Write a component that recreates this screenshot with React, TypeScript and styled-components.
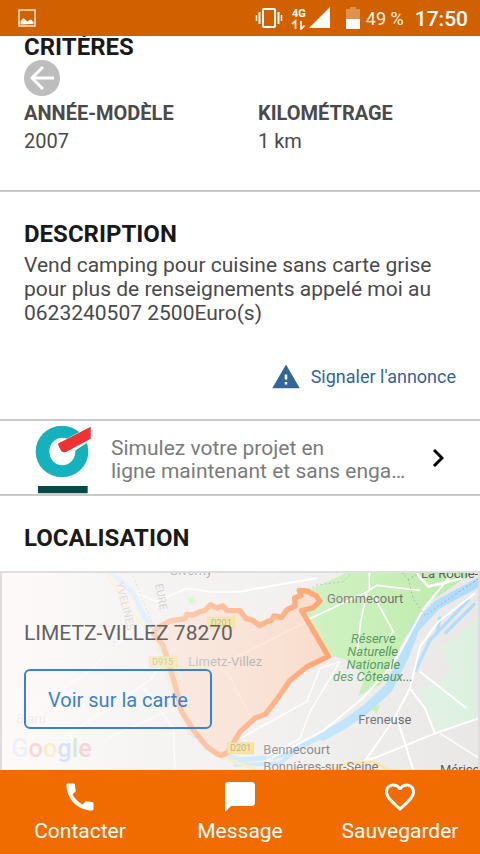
import React from "react";
import styled, { createGlobalStyle } from "styled-components";
import { MdCall, MdChatBubble, MdFavoriteBorder, MdWarning } from "react-icons/md";

const GlobalStyle = createGlobalStyle`
  *, *::before, *::after { box-sizing: border-box; }
  body {
    margin: 0;
    background: #fff;
    color: #4a4a4a;
    font-family: Roboto, "Liberation Sans", sans-serif;
    font-size: 20px;
    line-height: 24px;
  }
  h1, h2, p, dl, dt, dd { margin: 0; }
  button { font: inherit; cursor: pointer; }
  svg { display: block; flex: none; }
`;

const Screen = styled.div`
  display: flex;
  flex-direction: column;
  min-height: 100vh;
`;

const StatusBar = styled.header`
  position: sticky;
  top: 0;
  z-index: 2;
  display: flex;
  align-items: center;
  justify-content: space-between;
  height: 36px;
  padding: 0 12px 0 18px;
  background: #d16000;
  color: #fff;
`;

const StatusGroup = styled.div`
  display: flex;
  align-items: center;
`;

const Network = styled.div`
  margin: 0 15px 0 8px;
`;

const Battery = styled.span`
  margin: 0 11px 0 6px;
  padding-top: 2px;
  font-size: 18px;
  color: #fff3e8;
`;

const Clock = styled.time`
  padding-top: 2px;
  font-size: 21px;
  font-weight: 500;
`;

const Main = styled.main`
  flex: 1;
  display: flex;
  flex-direction: column;
`;

const Section = styled.section<{ $pad: string; $line?: boolean }>`
  padding: ${(p) => p.$pad};
  border-bottom: ${(p) => (p.$line ? "2px solid #cacaca" : "none")};
`;

const Heading = styled.h2<{ $tight?: boolean }>`
  color: #1a1a1a;
  font-size: 24px;
  font-weight: 700;
  line-height: ${(p) => (p.$tight ? 22 : 28)}px;
`;

const BackButton = styled.button`
  display: grid;
  place-items: center;
  width: 36px;
  height: 36px;
  margin-top: 2px;
  padding: 0;
  border: 0;
  border-radius: 50%;
  background: #bdbdbd;
`;

const Criteria = styled.dl`
  display: grid;
  grid-template-columns: 1fr 1fr;
  column-gap: 36px;
  margin-top: 5px;
`;

const Criterion = styled.div`
  dt { font-weight: 700; }
  dd { margin-top: 4px; }
`;

const Description = styled.p`
  margin-top: 5px;
  font-size: 21px;
`;

const ReportRow = styled.div`
  display: flex;
  justify-content: flex-end;
  margin-top: 37px;
`;

const ReportLink = styled.a`
  display: flex;
  align-items: center;
  gap: 10px;
  color: #33659a;
  font-size: 18px;
  text-decoration: none;
`;

const Promo = styled.a`
  display: flex;
  align-items: center;
  gap: 20px;
  padding: 0 36px 0 35px;
  border-bottom: 2px solid #cacaca;
  color: #7b7b7b;
  text-decoration: none;
`;

const PromoText = styled.span`
  flex: 1;
  padding-top: 4px;
  font-size: 21px;
  line-height: 23px;
`;

const MapPanel = styled.section`
  position: relative;
  flex: 1;
  padding: 48px 24px 41px;
  overflow: hidden;
  border: solid #dedede;
  border-width: 2px 2px 0;
`;

const MapDrawing = styled.svg`
  position: absolute;
  inset: 0;
  width: 100%;
  height: 100%;
`;

const MapContent = styled.div`
  position: relative;
  display: flex;
  flex-direction: column;
  align-items: flex-start;
  gap: 24px;
  margin-left: -2px;
`;

const Place = styled.p`
  color: #626262;
  font-size: 21px;
`;

const MapButton = styled.button`
  height: 60px;
  padding: 2px 22px 0;
  border: 2px solid #3d7fd6;
  border-radius: 6px;
  background: transparent;
  color: #3d7fd6;
`;

const ActionBar = styled.nav`
  position: sticky;
  bottom: 0;
  z-index: 2;
  display: grid;
  grid-template-columns: repeat(3, 1fr);
  height: 84px;
  background: #f06c00;
`;

const Action = styled.button`
  display: flex;
  flex-direction: column;
  align-items: center;
  gap: 4px;
  padding: 9px 0 0;
  border: 0;
  background: transparent;
  color: #fff;
  font-size: 21px;
`;

const PictureIcon = () => (
  <svg width="18" height="18" viewBox="0 0 18 18" aria-hidden="true">
    <rect x="1" y="1" width="16" height="16" fill="none" stroke="#ffe4cf" strokeWidth="1.5" />
    <path d="M2.5 15.5v-3l2-2.5 1-1 2 2 2 1.5 2-1.5 1.5-.5 2.5 2.500v2z" fill="#fff" />
  </svg>
);

const VibrateIcon = () => (
  <svg width="28" height="22" viewBox="0 0 28 22" fill="none" stroke="#fff" strokeWidth="2" aria-hidden="true">
    <rect x="8" y="2" width="12" height="18" rx="1" />
    <path d="M4.500 5v12M23.500 5v12" />
    <path d="M1.500 8v6M26.500 8v6" strokeWidth="1.500" />
  </svg>
);

const SignalIcon = () => (
  <svg width="40" height="24" viewBox="0 0 40 24" aria-label="4G" role="img">
    <text x="1" y="11" fill="#fff" fontFamily="Roboto, sans-serif" fontSize="11" fontWeight="700">
      4G
    </text>
    <path d="M1 18l3.500-3v8M10 15v8l3.500-3.500" fill="none" stroke="#ffe9d8" strokeWidth="1.800" />
    <path d="M39 1v21H18z" fill="#fff" />
  </svg>
);

const BatteryIcon = () => (
  <svg width="14" height="22" viewBox="0 0 14 22" aria-hidden="true">
    <path d="M4 0h6v2h4v10H0V2h4z" fill="#e0904f" />
    <path d="M0 12h14v10H0z" fill="#fff" />
  </svg>
);

const ArrowIcon = () => (
  <svg width="24" height="24" viewBox="0 0 24 24" fill="none" stroke="#fff" strokeWidth="3" aria-hidden="true">
    <path d="M24 12H2M13 1L2 12l11 11" />
  </svg>
);

const ChevronIcon = () => (
  <svg width="12" height="18" viewBox="0 0 12 18" fill="none" stroke="#000" strokeWidth="3" aria-hidden="true">
    <path d="M2 1l8 8-8 8" />
  </svg>
);

const PartnerLogo = () => (
  <svg width="56" height="73" viewBox="105 33 168 219" aria-hidden="true">
    <ellipse cx="186" cy="124.500" rx="79" ry="77.500" fill="#15b1bc" />
    <ellipse cx="187" cy="124.500" rx="39" ry="41" fill="#fff" />
    <path d="M180 97L273 48v43l-65 42-16 2z" fill="#fff" />
    <path d="M173 101L272 50v36l-70 38q-12 6-19-2z" fill="#f03232" />
    <path d="M114 228h149v22H114z" fill="#084a45" />
  </svg>
);

const ZONE =
  "M460 205L475 186 510 168 555 161 560 148 580 150 600 140 615 136 632 119 650 129 668 122 680 136 720 137 737 160 760 167 779 182 797 172 815 165 822 153 845 157 860 135 885 123 884 98 902 92 898 76 920 78 948 92 960 108 940 128 905 137 985 274 920 306 870 346 830 404 797 447 765 460 720 500 694 545 683 562 664 572 650 566 620 545 580 495 545 440 528 370 505 290 489 240Z";

const Map = () => (
  <MapDrawing viewBox="6 24 1428 591" preserveAspectRatio="xMinYMin slice" aria-hidden="true">
    <defs>
      <linearGradient id="veil">
        <stop offset="0" stopColor="#fffafa" stopOpacity="0.97" />
        <stop offset="0.15" stopColor="#fdfafa" stopOpacity="0.86" />
        <stop offset="0.35" stopColor="#fbfafa" stopOpacity="0.64" />
        <stop offset="0.6" stopColor="#fff" stopOpacity="0.4" />
        <stop offset="1" stopColor="#fff" stopOpacity="0.04" />
      </linearGradient>
    </defs>
    <path d="M0 0h1440v620H0z" fill="#e9e7e5" />
    <path d="M918 80L1040 22h380L1290 110 1236 180 1140 360 1075 392l20-60-50-45-65-20-70-130 55-25z" fill="#b8eaa4" />
    <path d="M1320 250L1440 160v300l-140 43-45-130 75-25 20-40z" fill="#dcf0df" />
    <path d="M560 100l20-8 10 18-15 10z" fill="#b8eaa4" />

    <path d="M320 10L400 85 430 150 475 210 500 300 525 400 570 500 640 555 720 585 830 575 900 548 960 515" fill="none" stroke="#a9dafb" strokeWidth="15" strokeLinejoin="round" />
    <path d="M960 518L1030 480 1100 430 1165 370 1215 270 1245 190 1310 120 1440 50" fill="none" stroke="#a9dafb" strokeWidth="27" strokeLinejoin="round" />
    <path d="M700 600l140-5 80-65 70-20" fill="none" stroke="#a9dafb" strokeWidth="12" />
    <path d="M1245 320l45-95 60-62 58-62M1310 210l10-55M1335 205l90-90" fill="none" stroke="#a9dafb" strokeWidth="10" />
    <path d="M1110 430l30-10-10 25z" fill="#b8eaa4" />

    <g fill="none" stroke="#fff" strokeWidth="6" strokeLinejoin="round">
      <path d="M410 85l60 25 90-40 70 10 90 0 110-20 120-20" />
      <path d="M920 166l180-85 30-20 130 15M1100 85l-18 85-10 90M1120 90l60 110-25 30M1108 22v50" strokeWidth="5" />
      <path d="M1360 22l-90 110-70 130-50 70-65 70-115 95-170 90" />
      <path d="M1425 85l-110 85-55 75-30 125-50 95-90 130M1230 370l45 60 30 75 130-45M1260 320l140 110M1305 505l-110 45-150 60M1190 455l50 160" />
      <path d="M1320 505l125 80M720 520l200-110 40-100 60-20M620 320l240-120 60-30M680 320l80 150M1020 290l-90 150-30 80-100 55" strokeWidth="4" />
      <path d="M0 520l120-110 150-90 60-60 80-80M340 420l110-75 70-90M430 370l90 120 5 130M230 550l-20-45 130-85M320 520l180-80" strokeWidth="4" />
      <path d="M1250 25l35 40 100-25" strokeWidth="8" />
    </g>
    <path d="M315 20l35 55 45 70 60 60 40 95 25 95 40 90 80 80 130 50M1000 615l40-20 80-5 45 25" fill="none" stroke="#f8df8c" strokeWidth="9" />
    <g fill="none" stroke="#9d9d9d" strokeWidth="3" strokeDasharray="5 8">
      <path d="M395 20l30 80 35 80M350 190l-10 60-60 65M915 80l35-20 80-10 20-20" />
      <path d="M1205 22l20 20 30-15M1225 42l15 60 35 50 85-60 75-50" />
    </g>

    <path d={ZONE} fill="#ffb78c" fillOpacity="0.55" stroke="#ff7a30" strokeWidth="16" strokeLinejoin="round" />

    <g fill="#f3cf40" stroke="#d8b94a" strokeWidth="2">
      <path d="M623 157h81v33h-81zM448 275h82v32h-82zM682 533h79v33h-79z" />
    </g>
    <g fontFamily="Roboto, sans-serif" fontSize="27" fill="#6d6746">
      <text x="632" y="184">D201</text>
      <text x="456" y="301">D915</text>
      <text x="690" y="559">D201</text>
    </g>

    <g fontFamily="Roboto, sans-serif" fontSize="39" fill="#4c4c4c">
      <text x="508" y="30">Giverny</text>
      <text x="565" y="303" fill="#777">Limetz-Villez</text>
      <text x="981" y="113">Gommecourt</text>
      <text x="1263" y="40">La Roche-</text>
      <text x="1075" y="476">Freneuse</text>
      <text x="790" y="566">Bennecourt</text>
      <text x="790" y="617">Bonnières-sur-Seine</text>
      <text x="1320" y="627">Méricourt</text>
      <text x="48" y="473">Blaru</text>
      <g fill="#237d2b" fontStyle="italic" textAnchor="middle">
        <text x="1120" y="233">Réserve</text>
        <text x="1118" y="272">Naturelle</text>
        <text x="1120" y="311">Nationale</text>
        <text x="1119" y="349">des Côteaux...</text>
      </g>
    </g>
    <g fontFamily="Roboto, sans-serif" fontSize="33" fill="#888">
      <text transform="translate(347 54) rotate(76)">YVELINES</text>
      <text transform="translate(465 58) rotate(79)">EURE</text>
    </g>
    <path d="M0 0h1440v620H0z" fill="url(#veil)" />
    <g fontFamily="Roboto, sans-serif" fontSize="76" fontWeight="500" opacity="0.18">
      <text x="34" y="576">
        <tspan fill="#b9c9f3">G</tspan>
        <tspan fill="#ea4335">o</tspan>
        <tspan fill="#fbbc05">o</tspan>
        <tspan fill="#4285f4">g</tspan>
        <tspan fill="#34a853">l</tspan>
        <tspan fill="#ea4335">e</tspan>
      </text>
    </g>
  </MapDrawing>
);

const criteria = [
  { label: "ANNÉE-MODÈLE", value: "2007" },
  { label: "KILOMÉTRAGE", value: "1 km" },
];

const actions = [
  { label: "Contacter", Icon: MdCall },
  { label: "Message", Icon: MdChatBubble },
  { label: "Sauvegarder", Icon: MdFavoriteBorder },
];

export default function App() {
  return (
    <>
      <GlobalStyle />
      <Screen>
        <StatusBar>
          <PictureIcon />
          <StatusGroup>
            <VibrateIcon />
            <Network>
              <SignalIcon />
            </Network>
            <BatteryIcon />
            <Battery>49 %</Battery>
            <Clock>17:50</Clock>
          </StatusGroup>
        </StatusBar>

        <Main>
          <Section $pad="0 24px 37px" $line>
            <Heading $tight>CRITÈRES</Heading>
            <BackButton type="button" aria-label="Retour">
              <ArrowIcon />
            </BackButton>
            <Criteria>
              {criteria.map((c) => (
                <Criterion key={c.label}>
                  <dt>{c.label}</dt>
                  <dd>{c.value}</dd>
                </Criterion>
              ))}
            </Criteria>
          </Section>

          <Section $pad="28px 24px 27px" $line>
            <Heading>DESCRIPTION</Heading>
            <Description>
              Vend camping pour cuisine sans carte grise pour plus de renseignements appelé moi au 0623240507
              2500Euro(s)
            </Description>
            <ReportRow>
              <ReportLink href="#signaler">
                <MdWarning size={30} />
                Signaler l'annonce
              </ReportLink>
            </ReportRow>
          </Section>

          <Promo href="#simulation">
            <PartnerLogo />
            <PromoText>
              Simulez votre projet en
              <br />
              ligne maintenant et sans enga…
            </PromoText>
            <ChevronIcon />
          </Promo>

          <Section $pad="28px 24px 19px">
            <Heading>LOCALISATION</Heading>
          </Section>

          <MapPanel>
            <Map />
            <MapContent>
              <Place>LIMETZ-VILLEZ 78270</Place>
              <MapButton type="button">Voir sur la carte</MapButton>
            </MapContent>
          </MapPanel>
        </Main>

        <ActionBar>
          {actions.map(({ label, Icon }) => (
            <Action type="button" key={label}>
              <Icon size={36} />
              {label}
            </Action>
          ))}
        </ActionBar>
      </Screen>
    </>
  );
}
